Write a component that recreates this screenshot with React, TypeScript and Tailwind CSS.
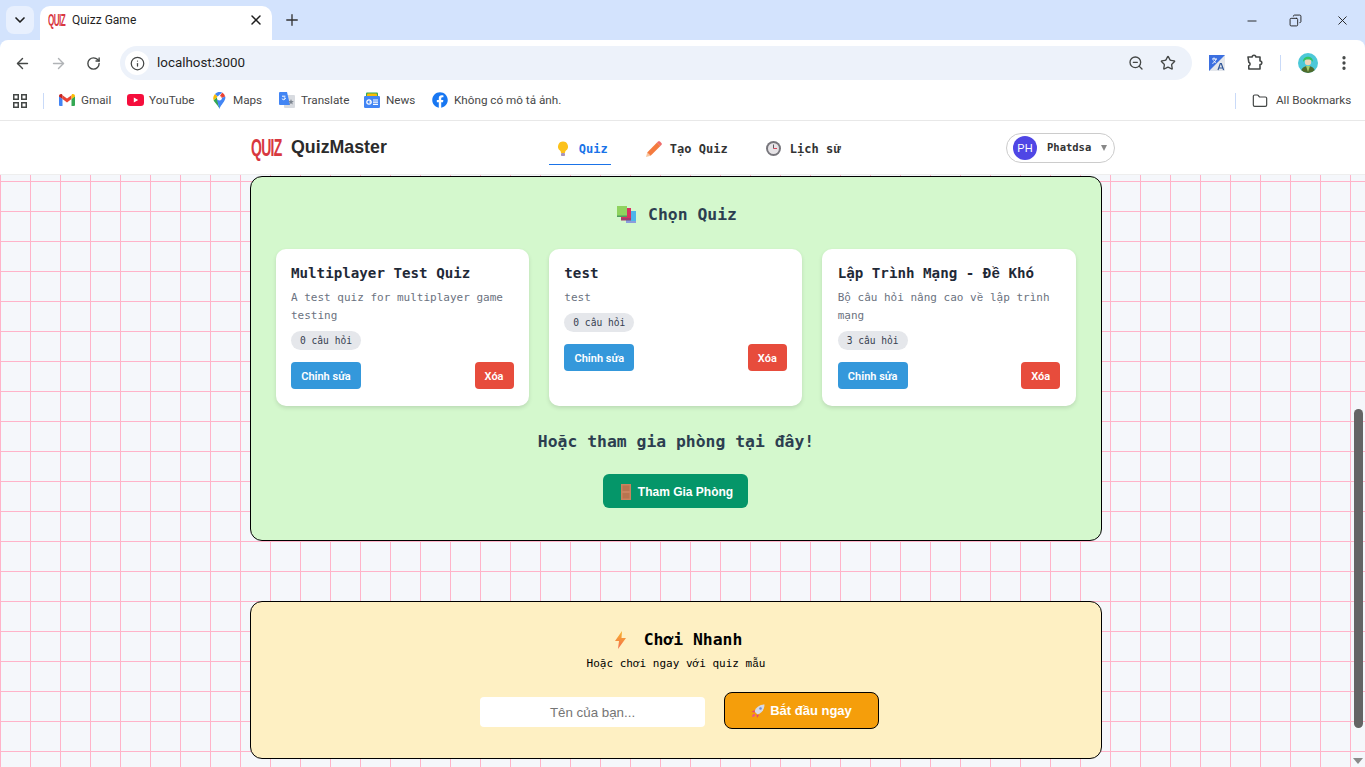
import { ArrowLeft, ArrowRight, ChevronDown, Copy, EllipsisVertical, Folder, Info, Minus, Plus, RotateCw, Star, X, ZoomOut } from 'lucide-react'
import { FaFacebook } from 'react-icons/fa'
import type { ReactNode } from 'react'

const chromeFont = "[font-family:Roboto,sans-serif]"

function QuizLogo({ small }: { small?: boolean }) {
  return (
    <span
      className={`inline-block origin-left font-bold text-[#d8383f] [font-family:'Liberation_Sans',sans-serif] tracking-[-1px] ${
        small ? 'w-[16px] text-[14px] scale-x-[0.58] scale-y-[1.2]' : 'w-[32px] text-[20px] scale-x-[0.7] scale-y-[1.15]'
      }`}
    >
      QUIZ
    </span>
  )
}

function Viet({ children }: { children: ReactNode }) {
  return <span className="leading-none [font-family:'Liberation_Mono',monospace]">{children}</span>
}

function GmailIcon() {
  return (
    <svg width="16" height="12" viewBox="0 0 16 12">
      <path d="M0 2v9a1 1 0 0 0 1 1h2.5V5z" fill="#4285f4" />
      <path d="M16 2v9a1 1 0 0 1-1 1h-2.5V5z" fill="#34a853" />
      <path d="M3.5 5 8 8.4 12.5 5V1.2L8 4.6 3.5 1.2z" fill="#ea4335" />
      <path d="M0 2c0-1.6 1.9-2.5 3.2-1.5l.3.7V5L0 2.4z" fill="#c5221f" />
      <path d="M16 2c0-1.6-1.9-2.5-3.2-1.5l-.3.7V5L16 2.4z" fill="#fbbc04" />
    </svg>
  )
}

function YoutubeIcon() {
  return (
    <svg width="17" height="12" viewBox="0 0 17 12">
      <rect width="17" height="12" rx="3.2" fill="#f50e3c" />
      <path d="M6.8 3.4v5.2L11.2 6z" fill="#fff" />
    </svg>
  )
}

function MapsIcon() {
  return (
    <svg width="13" height="17" viewBox="0 0 13 17">
      <path d="M6.5 17C5.7 14 1.6 10.8.6 8.3L4 5z" fill="#34a853" />
      <path d="M2 1.9A6.4 6.4 0 0 0 .6 8.3L4.6 4.4z" fill="#fbbc04" />
      <path d="M2 1.9A6.4 6.4 0 0 1 9.2.6L4.6 4.4z" fill="#4285f4" />
      <path d="M9.2.6a6.4 6.4 0 0 1 3 4L4.3 8z" fill="#ea4335" />
      <path d="M12.2 4.6C13.4 8.6 8 12 6.5 17L4 8z" fill="#4285f4" />
      <circle cx="6.5" cy="6.3" r="2.3" fill="#fff" />
    </svg>
  )
}

function TranslateIcon() {
  return (
    <svg width="16" height="16" viewBox="0 0 16 16">
      <rect x="5" y="3" width="11" height="13" rx="1" fill="#d8dbe0" />
      <path d="M1 0h7l3 13H1a1 1 0 0 1-1-1V1a1 1 0 0 1 1-1" fill="#4285f4" />
      <path d="M3 4.2h3.4M3.2 6.6c0 1.6 3.2 1.6 3.2-.6H4.8" stroke="#fff" strokeWidth="1" fill="none" />
      <path d="m12 7 .8 2 2 .2-1.6 1.2.6 2-1.8-1.2-1.8 1.2.6-2-1.6-1.2 2-.2z" fill="#7d8590" />
    </svg>
  )
}

function NewsIcon() {
  return (
    <svg width="16" height="16" viewBox="0 0 16 16">
      <rect x="2" y="0.5" width="12" height="6" rx="1" fill="#34a853" />
      <rect x="3" y="1.5" width="10" height="5" rx="1" fill="#fbbc04" />
      <rect x="0" y="4" width="16" height="12" rx="1.2" fill="#4285f4" />
      <circle cx="5" cy="10" r="2.2" fill="none" stroke="#fff" strokeWidth="1.2" />
      <path d="M5.2 10h2.2M9 8h5M9 10.2h5M9 12.4h5" stroke="#fff" strokeWidth="1.2" />
    </svg>
  )
}

function AppsIcon() {
  return (
    <svg width="16" height="16" viewBox="0 0 16 16" fill="none" stroke="#444746" strokeWidth="1.5">
      <rect x="1.75" y="1.75" width="4.5" height="4.5" />
      <rect x="9.75" y="1.75" width="4.5" height="4.5" />
      <rect x="1.75" y="9.75" width="4.5" height="4.5" />
      <rect x="9.75" y="9.75" width="4.5" height="4.5" />
    </svg>
  )
}

function ExtTranslateIcon() {
  return (
    <svg width="16" height="16" viewBox="0 0 16 16">
      <rect width="16" height="16" fill="#e4e7ec" />
      <path d="M0 0h16L0 16z" fill="#3b6fe0" />
      <path d="M3 4h5M5 2.5V4M7 4c-.3 2-1.7 3.6-3.6 4.4M4.4 5.5c.6 1 1.4 1.7 2.3 2.2" stroke="#fff" strokeWidth="1" fill="none" />
      <path d="M9 15l2.3-6.5h1L14.6 15M10 13h3.4" stroke="#2f5597" strokeWidth="1.2" fill="none" />
    </svg>
  )
}

function PuzzleIcon() {
  return (
    <svg width="18" height="18" viewBox="0 0 18 18" fill="none" stroke="#444746" strokeWidth="1.6">
      <path d="M2 3h4.2a1.8 1.8 0 0 1 3.6 0H14v4a1.8 1.8 0 0 1 0 3.6V15H2.8v-3.2a1.9 1.9 0 0 0 0-3.6z" strokeLinejoin="round" />
    </svg>
  )
}

function AvatarIcon() {
  return (
    <svg width="20" height="20" viewBox="0 0 20 20">
      <defs>
        <clipPath id="av"><circle cx="10" cy="10" r="10" /></clipPath>
      </defs>
      <g clipPath="url(#av)">
        <rect width="20" height="20" fill="#4cc8d8" />
        <path d="M3 20c0-5 3-7 7-7s7 2 7 7z" fill="#4f6b2c" />
        <path d="M8 13h4l-2 6z" fill="#a6d06a" />
        <circle cx="10" cy="9" r="3.2" fill="#f0d5b8" />
        <path d="M5 9C4.600 2 15.400 2 15 9c-1.200-1.900-3-2.500-5-2.500S6.200 7.100 5 9" fill="#35c463" />
      </g>
    </svg>
  )
}

function BulbIcon() {
  return (
    <svg width="14" height="16" viewBox="0 0 14 16">
      <path d="M7 .5a5 5 0 0 0-3 9c.7.6.9 1.500 1 2.500h4c.1-1 .3-1.900 1-2.500a5 5 0 0 0-3-9" fill="#fcc21b" />
      <rect x="5" y="12" width="4" height="3" rx="0.8" fill="#a795bd" />
    </svg>
  )
}

function PencilIcon() {
  return (
    <svg width="16" height="16" viewBox="0 0 16 16">
      <path d="M0 16 1.200 11.400 4.600 14.800z" fill="#f9c7a0" />
      <path d="M1.200 11.400 11 1.600 14.400 5 4.600 14.800z" fill="#f47b3f" />
      <path d="m11 1.600 1-1c.6-.6 1.400-.6 2 0l1.400 1.400c.6.6.6 1.400 0 2l-1 1z" fill="#ee6c6c" />
    </svg>
  )
}

function ClockIcon() {
  return (
    <svg width="15" height="15" viewBox="0 0 15 15">
      <circle cx="7.500" cy="7.500" r="7.500" fill="#77767c" />
      <circle cx="7.500" cy="7.500" r="5.500" fill="#e6e3e6" />
      <path d="M7.500 3.500v4" stroke="#5b5a60" strokeWidth="1" />
      <path d="M7.500 7.500h3.500" stroke="#d7465c" strokeWidth="1" />
    </svg>
  )
}

function BooksIcon() {
  return (
    <svg width="19" height="18" viewBox="0 0 19 18">
      <rect x="9" y="5" width="10" height="12" fill="#4db5ea" />
      <rect x="9" y="15" width="10" height="2" fill="#8b9ddb" />
      <rect x="4" y="2" width="10" height="12" fill="#d9305f" />
      <rect x="4" y="12" width="10" height="2.500" fill="#a33a70" />
      <rect x="0" y="0" width="10" height="11" fill="#8fd35f" />
      <rect x="0" y="9.500" width="10" height="1.500" fill="#4f9d5e" />
    </svg>
  )
}

function DoorIcon() {
  return (
    <svg width="10" height="16" viewBox="0 0 10 16">
      <rect width="10" height="16" fill="#c9835f" />
      <rect x="1.500" y="1.500" width="7" height="5.500" fill="#b8744f" />
      <rect x="1.500" y="9" width="7" height="5.500" fill="#b8744f" />
    </svg>
  )
}

function BoltIcon() {
  return (
    <svg width="13" height="18" viewBox="0 0 13 18">
      <defs>
        <linearGradient id="bolt" x1="0" y1="0" x2="0" y2="1">
          <stop offset="0" stopColor="#f7b32b" />
          <stop offset="1" stopColor="#f36c4f" />
        </linearGradient>
      </defs>
      <path d="M8 0 1 10h4l-1 8 8-11H7.500z" fill="url(#bolt)" />
    </svg>
  )
}

function RocketIcon() {
  return (
    <svg width="14" height="14" viewBox="0 0 14 14">
      <path d="M3.500 7.500C5 3 9 .5 13.500.5 13.500 5 11 9 6.500 10.500z" fill="#d5d9e8" />
      <circle cx="9.500" cy="4.500" r="1.300" fill="#6f8fd8" />
      <path d="M.5 8 3.500 6 4 8.500zM6 14l2-3-2.500-.5z" fill="#e8436f" />
      <path d="M1 13c0-1.500.8-3 2-3.300l1.300 1.300C4 12.200 2.500 13 1 13" fill="#f0508a" />
    </svg>
  )
}

function Bookmark({ icon, label, className }: { icon: ReactNode; label: string; className: string }) {
  return (
    <div className={`flex items-center ${className}`}>
      {icon}
      <span className="whitespace-nowrap text-[11.700px] text-[#474747]">{label}</span>
    </div>
  )
}

function BrowserChrome() {
  return (
    <div className={`bg-[#d3e3fd] ${chromeFont}`}>
      {/* tab strip */}
      <div className="flex h-10 items-end">
        <div className="mb-[6px] ml-[6px] flex h-7 w-7 items-center justify-center rounded-lg bg-[#e8f0fe]">
          <ChevronDown className="h-4 w-4 text-[#1f1f1f]" strokeWidth={2.500} />
        </div>
        <div className="ml-[6px] flex h-[34px] w-[232px] items-center rounded-t-[10px] bg-white px-2 pb-[6px]">
          <div className="w-4"><QuizLogo small /></div>
          <span className="ml-2 text-[12px] text-[#1f1f1f]">Quizz Game</span>
          <X className="ml-auto h-4 w-4 text-[#1f1f1f]" strokeWidth={2.200} />
        </div>
        <div className="mb-[10px] ml-[10px] flex h-5 w-5 items-center justify-center">
          <Plus className="h-[18px] w-[18px] text-[#333]" strokeWidth={1.800} />
        </div>
        <div className="mb-3 ml-auto flex items-center text-[#1f1f1f]">
          <Minus className="mr-[30px] h-[14px] w-[14px]" strokeWidth={1.600} />
          <Copy className="mr-[33px] h-[13px] w-[13px] -scale-x-100" strokeWidth={1.700} />
          <X className="mr-[15px] h-[15px] w-[15px]" strokeWidth={1.500} />
        </div>
      </div>

      {/* toolbar */}
      <div className="flex h-10 items-center rounded-t-[8px] bg-white pt-[6px]">
        <ArrowLeft className="ml-[14px] h-[17px] w-[17px] text-[#444746]" strokeWidth={2} />
        <ArrowRight className="ml-[19px] h-[17px] w-[17px] text-[#b0b3b6]" strokeWidth={2} />
        <RotateCw className="ml-[19px] h-[15px] w-[15px] text-[#444746]" strokeWidth={2.200} />
        <div className="ml-[19px] flex h-[34px] w-[1072px] items-center rounded-full bg-[#edf2fa] pl-[5px] pr-4">
          <div className="flex h-6 w-6 items-center justify-center rounded-full bg-white">
            <Info className="h-[15px] w-[15px] text-[#444746]" strokeWidth={2} />
          </div>
          <span className="ml-2 text-[13.400px] text-[#1f1f1f]">localhost:3000</span>
          <ZoomOut className="ml-auto h-4 w-4 text-[#444746]" strokeWidth={2} />
          <Star className="ml-[16px] h-4 w-4 text-[#444746]" strokeWidth={2} />
        </div>
        <div className="ml-[17px] flex items-center">
          <ExtTranslateIcon />
          <div className="ml-[21px]"><PuzzleIcon /></div>
          <div className="ml-[16px] h-4 w-px bg-[#c9daf8]" />
          <div className="ml-[17px]"><AvatarIcon /></div>
          <EllipsisVertical className="ml-[17px] h-[18px] w-[18px] text-[#444746]" strokeWidth={2.400} />
        </div>
      </div>

      {/* bookmarks */}
      <div className="flex h-[41px] items-center border-b border-[#e8e8e8] bg-white pt-[1px]">
        <div className="ml-3"><AppsIcon /></div>
        <div className="ml-[15px] h-4 w-px bg-[#c9daf8]" />
        <Bookmark icon={<GmailIcon />} label="Gmail" className="ml-[15px] w-[68px] gap-[6px]" />
        <Bookmark icon={<YoutubeIcon />} label="YouTube" className="w-[86px] gap-[5px]" />
        <Bookmark icon={<MapsIcon />} label="Maps" className="w-[66px] gap-[7px]" />
        <Bookmark icon={<TranslateIcon />} label="Translate" className="w-[85px] gap-[6px]" />
        <Bookmark icon={<NewsIcon />} label="News" className="w-[68px] gap-[6px]" />
        <Bookmark icon={<FaFacebook className="h-4 w-4 text-[#1877f2]" />} label="Không có mô tả ảnh." className="gap-[6px]" />
        <div className="ml-auto h-4 w-px bg-[#c9daf8]" />
        <Folder className="ml-4 h-4 w-4 text-[#444746]" strokeWidth={1.800} />
        <span className="ml-2 mr-[14px] w-[75px] whitespace-nowrap text-[11.700px] text-[#474747]">All Bookmarks</span>
      </div>
    </div>
  )
}

function NavItem({ icon, label, active, className }: { icon: ReactNode; label: ReactNode; active?: boolean; className: string }) {
  return (
    <div className={`flex h-[30px] items-center border-b pb-[2px] pl-[7px] ${active ? 'border-[#1a73e8]' : 'border-transparent'} ${className}`}>
      {icon}
      <span className={`text-[12px] font-bold ${active ? 'text-[#1a73e8]' : 'text-[#333]'}`}>{label}</span>
    </div>
  )
}

function TopNav() {
  return (
    <div className="h-[54px] border-b border-[#eee] bg-white">
      <div className="ml-[250px] flex h-[53px] w-[865px] items-center">
        <div className="ml-[1px] w-[40px]"><QuizLogo /></div>
        <span className="text-[17.800px] font-bold text-[#2b2b2b] [font-family:'Liberation_Sans',sans-serif]">QuizMaster</span>
        <div className="ml-[162px] mt-[5px] flex">
          <NavItem icon={<BulbIcon />} label="Quiz" active className="w-[62px] gap-[9px]" />
          <NavItem icon={<PencilIcon />} label="Tạo Quiz" className="ml-[28px] w-[90px] gap-2" />
          <NavItem icon={<ClockIcon />} label={<>Lịch s<Viet>ử</Viet></>} className="ml-[30px] w-[85px] gap-[9px]" />
        </div>
        <div className="ml-auto mt-[1px] flex h-[30px] w-[109px] items-center rounded-full border border-[#ccc] bg-white pl-[6px]">
          <div className="flex h-6 w-6 items-center justify-center rounded-full bg-[#4f46e5] text-[11px] text-white [font-family:'Liberation_Sans',sans-serif]">PH</div>
          <span className="ml-[10px] text-[10.500px] font-bold text-[#333]">Phatdsa</span>
          <span className="ml-[10px] h-0 w-0 border-x-[3px] border-t-[6px] border-x-transparent border-t-[#888]" />
        </div>
      </div>
    </div>
  )
}

function QuizCard({ title, desc, count }: { title: ReactNode; desc: ReactNode; count: string }) {
  return (
    <div className="rounded-[10px] bg-white px-[15.400px] pb-[17px] pt-[15px] shadow-[0_2px_4px_rgba(0,0,0,0.12)]">
      <h3 className="text-[14.200px] font-bold leading-[18px] text-[#1f2937]">{title}</h3>
      <p className="mt-[7px] text-[11px] leading-[18px] text-[#6b7280]">{desc}</p>
      <span className="mt-[6px] inline-block h-[19px] rounded-full bg-[#e5e7eb] px-[9px] text-[9.600px] leading-[19px] text-[#374151]">{count}</span>
      <div className="mt-[11px] flex justify-between [font-family:Roboto,sans-serif]">
        <button className="h-[27px] w-[70px] rounded-[4px] bg-[#3498db] pt-[3px] text-[11px] font-semibold text-white">Chỉnh sửa</button>
        <button className="h-[27px] w-[39px] rounded-[4px] bg-[#e74c3c] pt-[3px] text-[11px] font-semibold text-white">Xóa</button>
      </div>
    </div>
  )
}

export default function App() {
  return (
    <div className="flex h-[767px] w-[1365px] flex-col overflow-hidden">
      <BrowserChrome />
      <div className="relative flex-1 overflow-hidden bg-[#f5f7fb] bg-[linear-gradient(to_right,#ffb3c9_1px,transparent_1px),linear-gradient(to_bottom,#ffb3c9_1px,transparent_1px)] bg-[size:30px_30px] [font-family:'DejaVu_Sans_Mono',monospace]">
        <TopNav />

        <main className="ml-[250px] w-[852px] pt-[1px]">
          <section className="h-[365px] rounded-xl border border-black bg-[#d4f8cd] px-[24.600px] pt-[26px]">
            <h2 className="ml-[2px] flex h-[24px] items-center justify-center text-[16.400px] font-bold text-[#2c3e50]">
              <BooksIcon />
              <span className="ml-[12px]">Chọn Quiz</span>
            </h2>
            <div className="mt-[22px] grid grid-cols-[repeat(3,253.330px)] gap-5">
              <QuizCard title="Multiplayer Test Quiz" desc="A test quiz for multiplayer game testing" count="0 câu hỏi" />
              <QuizCard title="test" desc="test" count="0 câu hỏi" />
              <QuizCard
                title={<>Lập Trình Mạng - Đ<Viet>ề</Viet> Khó</>}
                desc={<>Bộ câu hỏi nâng cao v<Viet>ề</Viet> lập trình mạng</>}
                count="3 câu hỏi"
              />
            </div>
            <h2 className="mt-[24px] text-center text-[16.400px] font-bold leading-[24px] text-[#2c3e50]">Hoặc tham gia phòng tại đây!</h2>
            <div className="mt-5 flex justify-center pr-[2px]">
              <button className="flex h-[34px] w-[145px] items-center justify-center gap-[7px] rounded-[6px] bg-[#059669] pl-1 pt-[1px] text-[12px] font-bold text-white [font-family:'Liberation_Sans',sans-serif]">
                <DoorIcon />
                Tham Gia Phòng
              </button>
            </div>
          </section>

          <section className="mt-[60px] h-[158px] rounded-xl border border-black bg-[#fef0c3] pt-[26px]">
            <h2 className="ml-1 flex h-6 items-center justify-center text-[16.400px] font-bold text-black">
              <BoltIcon />
              <span className="ml-[17px]">Chơi Nhanh</span>
            </h2>
            <p className="mt-[3px] text-center text-[11px] leading-[18px] text-black">Hoặc chơi ngay với quiz m<Viet>ẫ</Viet>u</p>
            <div className="ml-[229px] mt-[19px] flex items-start gap-[19px]">
              <input
                placeholder="Tên của bạn..."
                className="mt-[5px] h-[30px] w-[225px] rounded-[4px] bg-white text-center text-[13.330px] placeholder:text-[#757575] [font-family:'Liberation_Sans',sans-serif]"
              />
              <button className="flex h-[37px] w-[155px] items-center justify-center gap-[5px] rounded-lg border border-black bg-[#f59e0b] pt-[1px] text-[13px] font-bold text-white [font-family:'Liberation_Sans',sans-serif]">
                <RocketIcon />
                Bắt đầu ngay
              </button>
            </div>
          </section>
        </main>

        {/* scrollbar overlay */}
        <div className="absolute right-[2px] top-[288px] h-[319px] w-[9px] rounded-full bg-[#646464]" />
        <div className="absolute bottom-[3px] right-[2px] h-0 w-0 border-x-[5px] border-t-[6px] border-x-transparent border-t-[#8a8a8a]" />
      </div>
    </div>
  )
}
